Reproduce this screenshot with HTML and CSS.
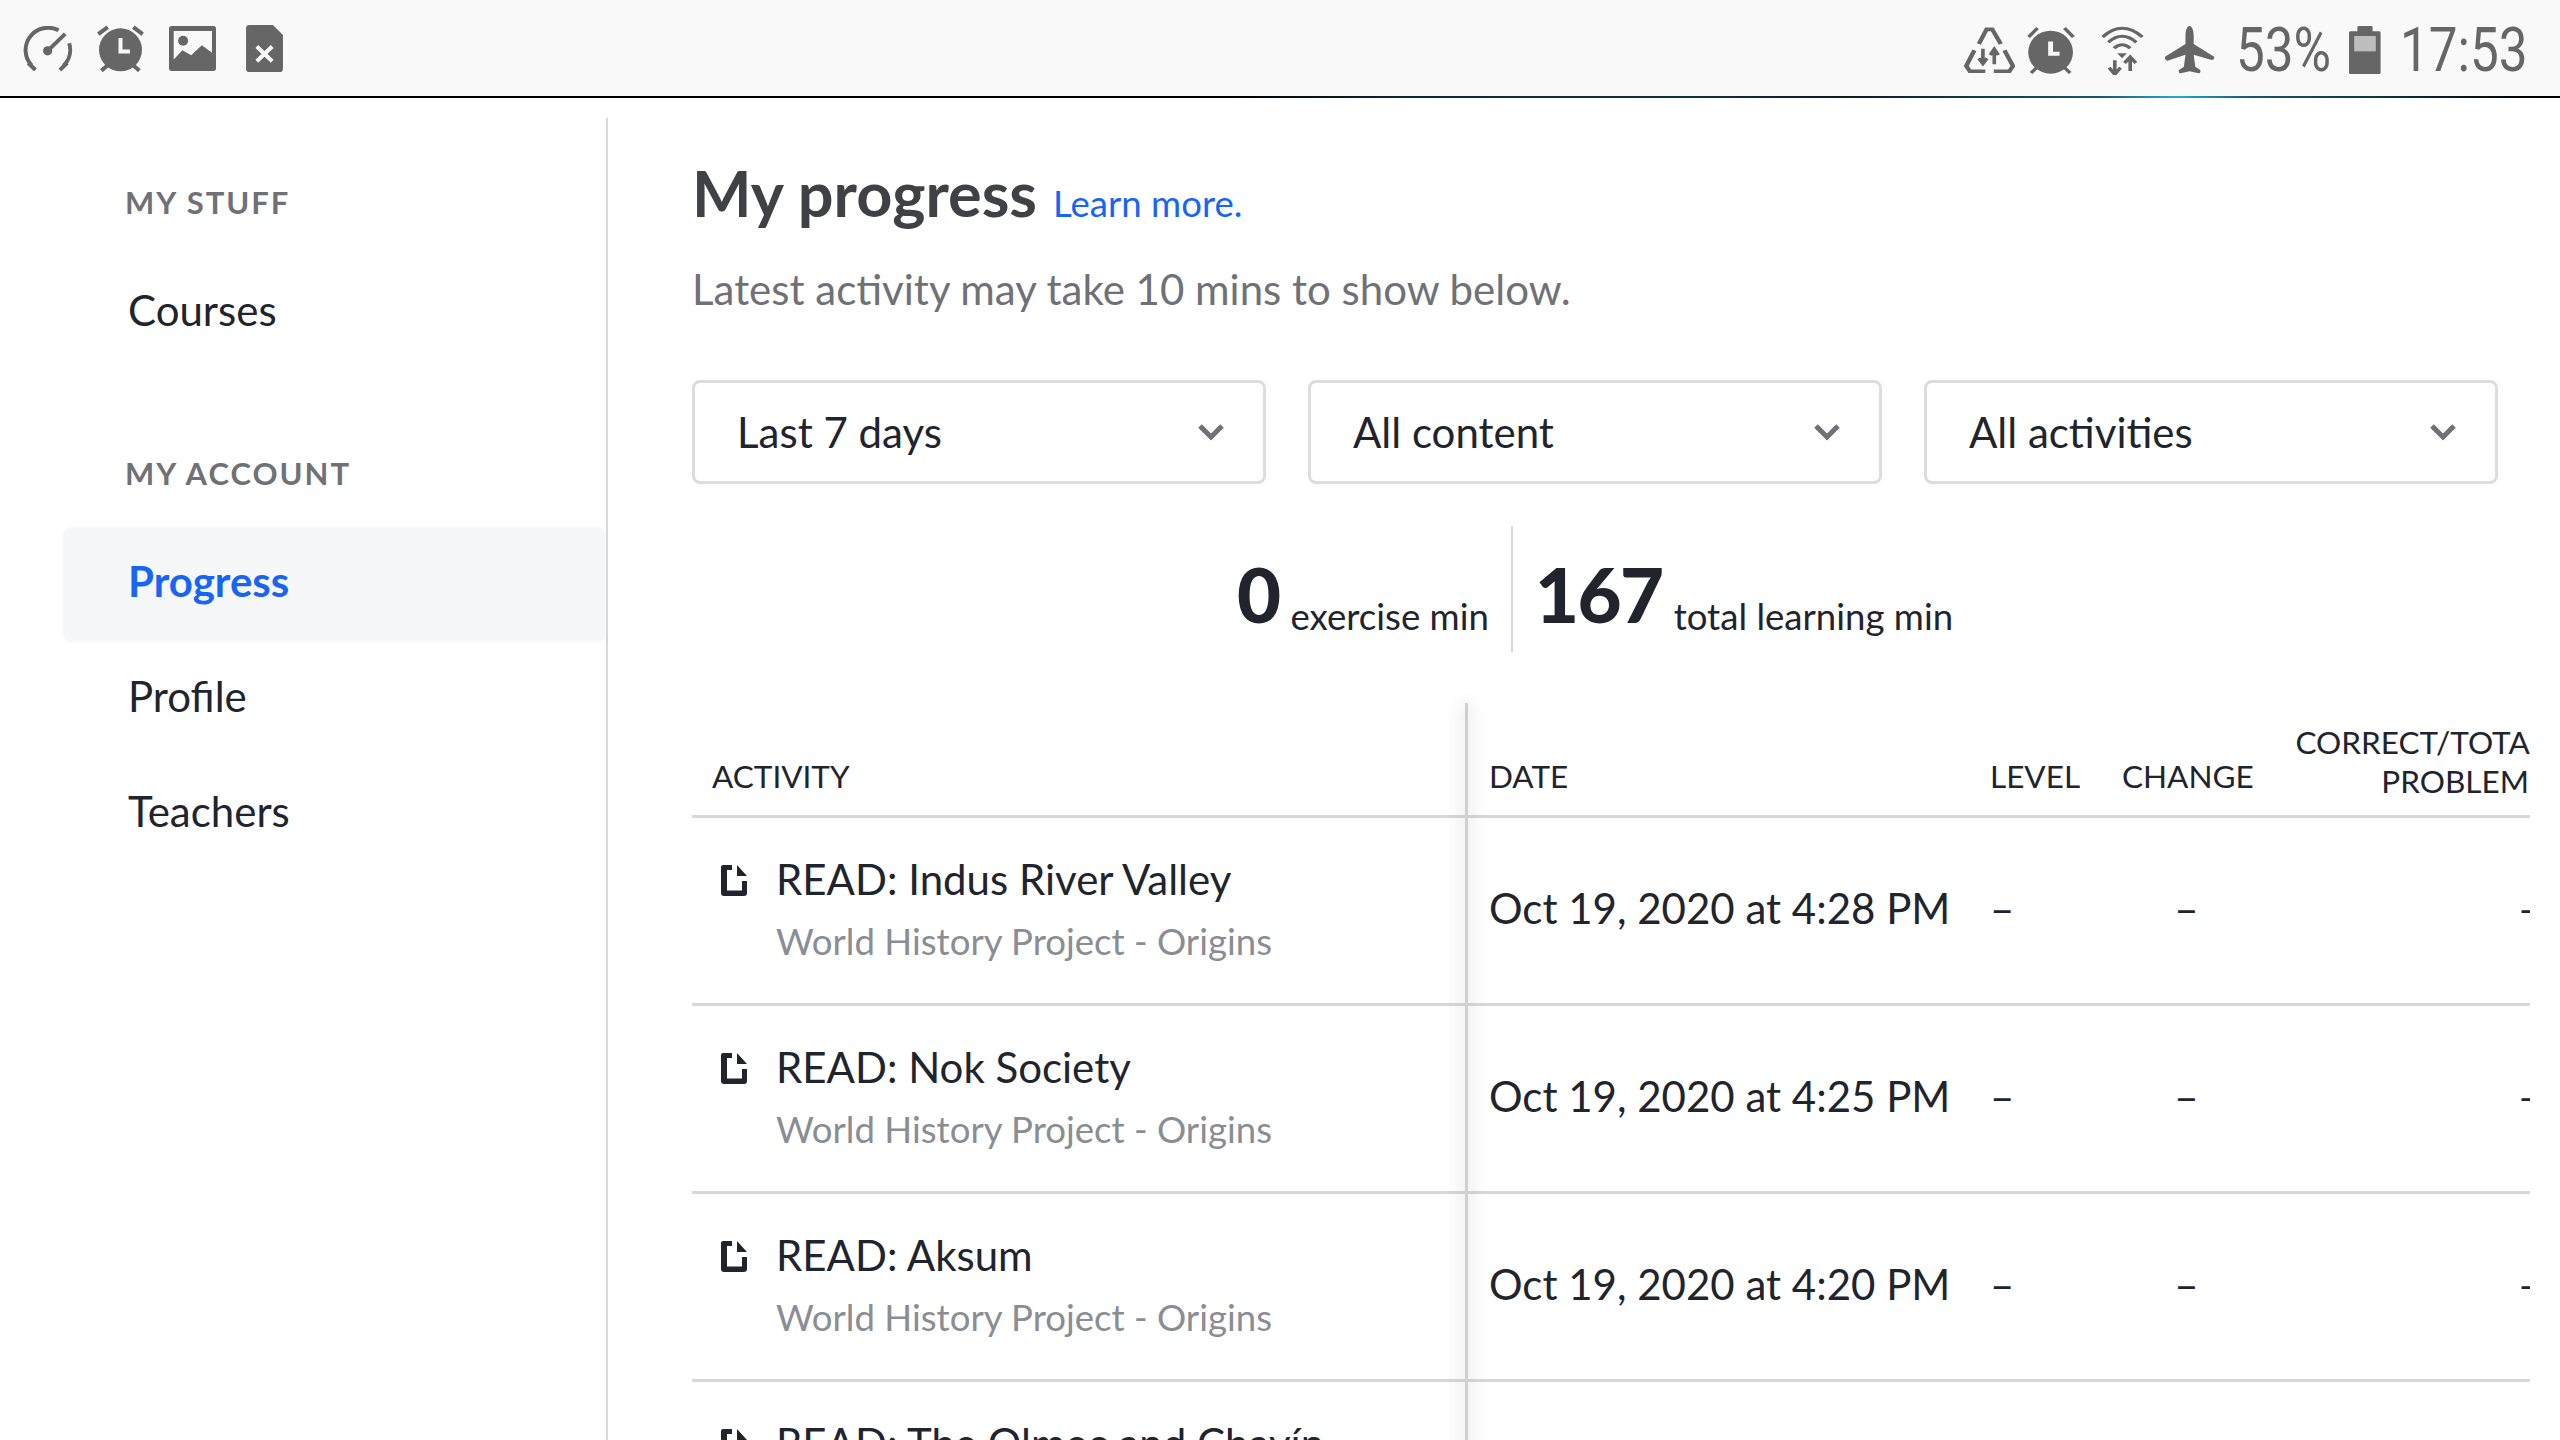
FILE: index.html
```html
<!DOCTYPE html>
<html lang="en">
<head>
    <meta charset="UTF-8">
    <title>My progress</title>
    <link rel="stylesheet" href="styles.css">
</head>
<body>
<div class="statusbar">
    <div class="status-left">
        <svg class="ic-gauge" viewBox="66 78 156 136">
            <path d="M95 198 A68 68 0 0 1 176 91 M84 190 L106 211" class="st" />
            <path d="M208 130 A68 68 0 0 1 191 198 M202 190 L180 211" class="st" />
            <path d="M143 153 L196 102" class="st" />
            <circle cx="143" cy="153" r="14" class="fl" />
        </svg>
        <svg class="ic-alarm" viewBox="290 76 140 140">
            <circle cx="360" cy="150" r="64" class="fl" />
            <path d="M294 103 L322 82 M426 103 L398 82 M303 212 L322 196 M416 212 L398 196" class="st" />
            <path d="M360 115 V155 H388" class="wh" />
        </svg>
        <svg class="ic-image" viewBox="506 78 140 134">
            <rect x="506" y="78" width="140" height="134" rx="8" class="fl" />
            <path d="M520 93 H634 V158 L604 135 L572 165 L546 150 L520 178 Z" fill="#f9f9f9" />
            <circle cx="548" cy="122" r="15" class="fl" />
        </svg>
        <svg class="ic-file" viewBox="738 76 110 140">
            <path d="M748 76 H818 L848 106 V206 Q848 216 838 216 H748 Q738 216 738 206 V86 Q738 76 748 76 Z" class="fl" />
            <path d="M770 140 L816 184 M816 140 L770 184" class="wh" />
        </svg>
    </div>
    <div class="status-right">
        <svg class="ic-recycle" viewBox="108 78 128 138" preserveAspectRatio="none">
            <path d="M147 129 L166 85 H180 L201 129 M136 148 L116 195 L125 211 H163 M210 148 L231 195 L222 211 H184" class="st2" />
            <path d="M157 143 V182 M147 172 L157 188 L167 172 M185 190 V152 M175 162 L185 144 L195 162" class="st3" />
        </svg>
        <svg class="ic-alarm2" viewBox="264 72 118 146" preserveAspectRatio="none">
            <ellipse cx="322" cy="150" rx="55" ry="64" class="fl" />
            <path d="M268 105 L290 78 M378 105 L356 78 M274 212 L288 196 M370 212 L356 196" class="st3" />
            <path d="M322 118 V155 H344" class="wh" />
        </svg>
        <svg class="ic-wifi" viewBox="446 70 106 150" preserveAspectRatio="none">
            <path d="M450 106 Q498 54 548 106 M464 122 Q498 86 533 122 M478 140 Q498 118 518 140" class="st3" />
            <path d="M486 155 H510 L498 170 Z" class="fl" />
            <path d="M480 176 V210 M466 198 L480 218 L494 198 M518 208 V172 M504 184 L518 166 L532 184" class="st3" />
        </svg>
        <svg class="ic-plane" viewBox="602 74 122 144" preserveAspectRatio="none">
            <path d="M662 74 C669 74 672 90 672 104 L672 128 L722 166 Q724 176 716 176 L672 160 L676 196 L688 206 Q690 216 684 216 L662 210 L640 216 Q634 216 636 206 L648 196 L652 160 L608 178 Q600 176 602 166 L652 128 L652 104 C652 90 655 74 662 74 Z" class="fl" />
        </svg>
        <span class="status-text pct">53%</span>
        <svg class="ic-battery" viewBox="1053 74 80 144" preserveAspectRatio="none">
            <path d="M1078 74 H1109 Q1112 74 1112 78 V90 H1128 Q1132 90 1132 94 V214 Q1132 218 1128 218 H1057 Q1053 218 1053 214 V94 Q1053 90 1057 90 H1074 V78 Q1074 74 1078 74 Z" class="fl" />
            <rect x="1066" y="104" width="54" height="46" fill="#bdbdbd" />
        </svg>
        <span class="status-text clock">17:53</span>
    </div>
</div>
<div class="status-line"></div>

<div class="layout">
    <aside class="sidebar">
        <h4 class="side-title">MY STUFF</h4>
        <a class="side-link">Courses</a>
        <h4 class="side-title second">MY ACCOUNT</h4>
        <a class="side-link active">Progress</a>
        <a class="side-link">Profile</a>
        <a class="side-link">Teachers</a>
    </aside>

    <main class="main">
        <div class="title-row">
            <h1>My progress</h1>
            <a class="learn">Learn more.</a>
        </div>
        <p class="subtitle">Latest activity may take 10 mins to show below.</p>

        <div class="filters">
            <div class="filter">Last 7 days
                <svg viewBox="0 0 28 18"><path d="M3 3 L14 14 L25 3" /></svg>
            </div>
            <div class="filter">All content
                <svg viewBox="0 0 28 18"><path d="M3 3 L14 14 L25 3" /></svg>
            </div>
            <div class="filter">All activities
                <svg viewBox="0 0 28 18"><path d="M3 3 L14 14 L25 3" /></svg>
            </div>
        </div>

        <div class="stats">
            <div class="stat"><b>0</b><span class="stat-label">exercise min</span></div>
            <div class="stat last"><b>167</b><span class="stat-label">total learning min</span></div>
        </div>

        <div class="table-wrap">
            <table>
                <thead>
                <tr>
                    <th class="c-activity">ACTIVITY</th>
                    <th class="c-date">DATE</th>
                    <th class="c-level">LEVEL</th>
                    <th class="c-change">CHANGE</th>
                    <th class="c-correct">CORRECT/TOTAL PROBLEMS</th>
                </tr>
                </thead>
                <tbody>
                <tr>
                    <td class="c-activity">
                        <div class="act">
                            <svg viewBox="0 0 26 31"><path d="M2 0 H11 V5 H6 V25.5 H21 V16 H26 V28 Q26 31 23 31 H3 Q0 31 0 28 V2 Q0 0 2 0 Z M16 0 L26 11 H16 Z" /></svg>
                            <div>
                                <div class="act-name">READ: Indus River Valley</div>
                                <div class="act-sub">World History Project - Origins</div>
                            </div>
                        </div>
                    </td>
                    <td class="c-date">Oct 19, 2020 at 4:28 PM</td>
                    <td class="c-level">–</td>
                    <td class="c-change">–</td>
                    <td class="c-correct">–</td>
                </tr>
                <tr>
                    <td class="c-activity">
                        <div class="act">
                            <svg viewBox="0 0 26 31"><path d="M2 0 H11 V5 H6 V25.5 H21 V16 H26 V28 Q26 31 23 31 H3 Q0 31 0 28 V2 Q0 0 2 0 Z M16 0 L26 11 H16 Z" /></svg>
                            <div>
                                <div class="act-name">READ: Nok Society</div>
                                <div class="act-sub">World History Project - Origins</div>
                            </div>
                        </div>
                    </td>
                    <td class="c-date">Oct 19, 2020 at 4:25 PM</td>
                    <td class="c-level">–</td>
                    <td class="c-change">–</td>
                    <td class="c-correct">–</td>
                </tr>
                <tr>
                    <td class="c-activity">
                        <div class="act">
                            <svg viewBox="0 0 26 31"><path d="M2 0 H11 V5 H6 V25.5 H21 V16 H26 V28 Q26 31 23 31 H3 Q0 31 0 28 V2 Q0 0 2 0 Z M16 0 L26 11 H16 Z" /></svg>
                            <div>
                                <div class="act-name">READ: Aksum</div>
                                <div class="act-sub">World History Project - Origins</div>
                            </div>
                        </div>
                    </td>
                    <td class="c-date">Oct 19, 2020 at 4:20 PM</td>
                    <td class="c-level">–</td>
                    <td class="c-change">–</td>
                    <td class="c-correct">–</td>
                </tr>
                <tr>
                    <td class="c-activity">
                        <div class="act">
                            <svg viewBox="0 0 26 31"><path d="M2 0 H11 V5 H6 V25.5 H21 V16 H26 V28 Q26 31 23 31 H3 Q0 31 0 28 V2 Q0 0 2 0 Z M16 0 L26 11 H16 Z" /></svg>
                            <div>
                                <div class="act-name">READ: The Olmec and Chavín</div>
                                <div class="act-sub">World History Project - Origins</div>
                            </div>
                        </div>
                    </td>
                    <td class="c-date">Oct 19, 2020 at 4:15 PM</td>
                    <td class="c-level">–</td>
                    <td class="c-change">–</td>
                    <td class="c-correct">–</td>
                </tr>
                </tbody>
            </table>
        </div>
    </main>
</div>
</body>
</html>
```
FILE: styles.css
```css
* {
    box-sizing: border-box;
    padding: 0;
    margin: 0;
}

html, body {
    height: 100%;
    overflow: hidden;
}

body {
    background: white;
    color: #21242c;
    font-family: Lato, "Open Sans", sans-serif;
    font-size: 42px;
}

/* status bar */
.statusbar {
    display: flex;
    justify-content: space-between;
    align-items: flex-start;
    height: 96px;
    padding: 24px 32px 0 22px;
    background: #f9f9f9;
}

.status-left, .status-right {
    display: flex;
    align-items: center;
    height: 48px;
}

.status-right {
    margin-top: 2px;
}

.status-line {
    height: 2px;
    background: linear-gradient(90deg, #000 0, #000 48%, #0b2a33 55%, #0c3440 66%, #0a1c22 72%, #14586e 82%, #26a8d6 85%, #14586e 88%, #0c3440 93%, #000 99%);
}

.statusbar .fl { fill: #666; }
.statusbar .st { fill: none; stroke: #666; stroke-width: 12; }
.statusbar .st2 { fill: none; stroke: #666; stroke-width: 11; }
.statusbar .st3 { fill: none; stroke: #666; stroke-width: 9; }
.statusbar .wh { fill: none; stroke: #f9f9f9; stroke-width: 12; }

.ic-gauge { width: 52px; height: 45px; }
.ic-alarm { width: 47px; height: 47px; margin-left: 23px; }
.ic-image { width: 47px; height: 45px; margin-left: 25px; }
.ic-file { width: 37px; height: 47px; margin-left: 30px; }

.ic-recycle { width: 52px; height: 46px; }
.ic-alarm2 { width: 48px; height: 49px; margin-left: 12px; }
.ic-wifi { width: 43px; height: 50px; margin-left: 26px; }
.ic-plane { width: 50px; height: 48px; margin-left: 21px; }
.ic-battery { width: 32px; height: 48px; margin-left: 18px; }

.status-text {
    display: inline-block;
    font-family: Roboto, sans-serif;
    font-weight: 400;
    font-size: 61px;
    line-height: 48px;
    color: #666;
    transform-origin: left center;
    transform: scaleX(0.84);
    white-space: nowrap;
}

.pct { width: 95px; margin-left: 21px; }
.clock { width: 128px; margin-left: 19px; }

/* page */
.layout {
    display: flex;
    height: calc(100vh - 98px);
    padding-top: 20px;
}

.sidebar {
    width: 608px;
    flex-shrink: 0;
    padding-left: 63px;
    border-right: 2px solid #d6d8da;
}

.side-title {
    font-size: 31px;
    font-weight: 700;
    letter-spacing: 2px;
    color: #6f7176;
    padding-left: 62px;
    margin-top: 64px;
    line-height: 40px;
}

.side-title.second {
    margin-top: 82px;
}

.side-link {
    display: block;
    height: 115px;
    line-height: 109px;
    padding-left: 65px;
}

.side-title + .side-link {
    margin-top: 34px;
}

.side-link.active {
    background: #f6f7f9;
    color: #1865f2;
    font-weight: 700;
    border-radius: 8px;
}

.main {
    flex: 1;
    min-width: 0;
    padding-left: 84px;
}

.title-row {
    display: flex;
    align-items: baseline;
    gap: 16px;
    margin-top: 39px;
}

h1 {
    font-size: 63px;
    font-weight: 700;
    color: #3f4146;
    line-height: 72px;
}

.learn {
    font-size: 36.6px;
    color: #1865f2;
}

.subtitle {
    color: #6f7176;
    margin-top: 35px;
}

.filters {
    display: flex;
    gap: 42px;
    margin-top: 66px;
}

.filter {
    display: flex;
    justify-content: space-between;
    align-items: center;
    width: 574px;
    height: 104px;
    padding: 0 38px 0 42px;
    border: 3px solid #dcdde0;
    border-radius: 8px;
}

.filter svg {
    width: 28px;
    height: 18px;
    fill: none;
    stroke: #6f7176;
    stroke-width: 5;
}

.stats {
    display: flex;
    justify-content: center;
    margin-top: 42px;
    margin-right: 62px;
}

.stat {
    height: 126px;
    padding: 30px 22px 0;
    font-size: 36.6px;
    line-height: 1;
    white-space: nowrap;
}

.stat.last {
    border-left: 2px solid #d6d8da;
}

.stat b {
    font-size: 76px;
    font-weight: 900;
    letter-spacing: -1.5px;
}

.stat-label {
    margin-left: 11px;
    vertical-align: -7px;
}

/* table with the frozen first column */
.table-wrap {
    position: relative;
    width: 1838px;
    margin-top: 41px;
    padding-top: 10px;
    overflow: hidden;
}

.table-wrap::after {
    content: "";
    position: absolute;
    left: 773px;
    top: 10px;
    bottom: 0;
    width: 3px;
    background: #cfd0d2;
    box-shadow: 0 0 18px rgba(0, 0, 0, 0.3);
}

table {
    width: 1854px;
    table-layout: fixed;
    border-collapse: separate;
    border-spacing: 0;
}

th {
    height: 115px;
    font-size: 31.5px;
    font-weight: 400;
    line-height: 39px;
    text-align: left;
    vertical-align: bottom;
    padding: 0 0 19px 23px;
    border-bottom: 3px solid #d6d8da;
}

td {
    height: 188px;
    padding-left: 23px;
    padding-bottom: 5px;
    border-bottom: 3px solid #d6d8da;
}

.c-activity { width: 774px; padding-left: 20px; }
.c-date { width: 501px; }
.c-level { width: 132px; }
.c-change { width: 155px; }
.c-correct { width: 292px; padding-right: 0; text-align: right; }

th.c-correct { padding-bottom: 14px; }
td.c-activity { padding-left: 0; }
td.c-change { padding-left: 20px; text-align: center; }
td.c-correct { padding-right: 4px; }

.act {
    display: flex;
    align-items: flex-start;
    gap: 29px;
    padding-left: 29px;
}

.act svg {
    width: 26px;
    height: 31px;
    fill: #21242c;
    flex-shrink: 0;
    margin-top: 14px;
}

.act-name {
    line-height: 56px;
}

.act-sub {
    font-size: 36.6px;
    line-height: 50px;
    margin-top: 9px;
    color: #8a8d93;
}
```
